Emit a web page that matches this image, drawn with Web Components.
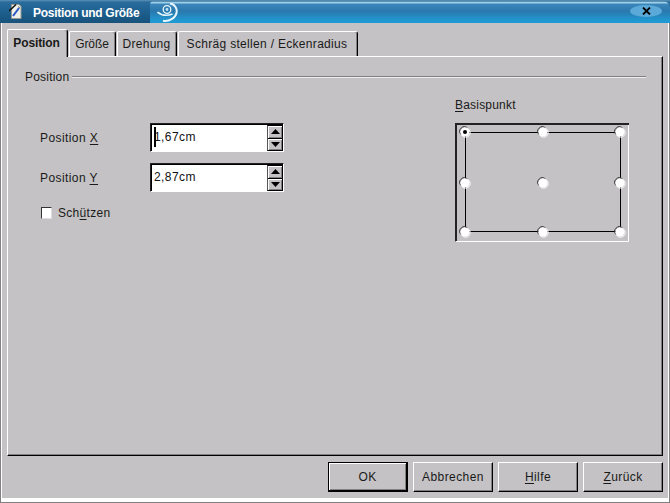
<!DOCTYPE html>
<html lang="de"><head><meta charset="utf-8"><title>Position und Größe</title>
<style>
html,body{margin:0;padding:0;background:#c4c2c4}
body{font:12px/14px "Liberation Sans",Arial,sans-serif;color:#1a1a1a;letter-spacing:.42px}
u{text-underline-offset:2px}
</style></head><body>
<dialog-window heading="Position und Größe">
  <tab-bar>
    <dlg-tab active>Position</dlg-tab>
    <dlg-tab w="47" style="letter-spacing:-.1px;padding-right:1px">Größe</dlg-tab>
    <dlg-tab w="60" style="letter-spacing:.28px;padding-right:1px">Drehung</dlg-tab>
    <dlg-tab w="180" style="letter-spacing:.31px;padding-right:2px">Schräg stellen / Eckenradius</dlg-tab>
  </tab-bar>
  <tab-panel>
    <group-line>Position</group-line>
    <div style="display:flex;justify-content:space-between">
      <div style="display:flex;flex-direction:column;padding:39px 0 0 15px">
        <spin-field value="1,67cm" caret style="margin-bottom:11px">Position <u>X</u></spin-field>
        <spin-field value="2,87cm" style="margin-bottom:15px">Position <u>Y</u></spin-field>
        <check-field>Sch<u>ü</u>tzen</check-field>
      </div>
      <base-point><u>B</u>asispunkt</base-point>
    </div>
  </tab-panel>
  <button-row>
    <dlg-button default>OK</dlg-button>
    <dlg-button>Abbrechen</dlg-button>
    <dlg-button><u>H</u>ilfe</dlg-button>
    <dlg-button><u>Z</u>urück</dlg-button>
  </button-row>
</dialog-window>
<script>
function def(name, css, html){
  customElements.define(name, class extends HTMLElement{
    connectedCallback(){
      if(this.shadowRoot) return;
      const r=this.attachShadow({mode:'open'});
      r.innerHTML='<style>'+css+'</style>'+(typeof html==='function'?html(this):html);
    }
  });
}
def('dialog-window',`
  :host{display:flex;flex-direction:column;width:670px;height:503px;overflow:hidden;background:#c4c2c4}
  .title{display:flex;height:23px;flex:none;background:linear-gradient(#5d93b8 0,#2a6c9c 2px,#1d5f8e 12px,#17527c 100%)}
  .left{width:150px;flex:none;display:flex;align-items:center;box-sizing:border-box;padding-left:9px}
  .left svg{flex:none}
  .name{font:bold 12px/16px "Liberation Sans",Arial,sans-serif;letter-spacing:-.28px;color:#fff;margin-left:11px;padding-top:2px;white-space:nowrap}
  .right{flex:1;display:flex;align-items:flex-start;justify-content:space-between;margin-top:1px;border-radius:4px 7px 0 0;
    background:linear-gradient(#17527c 0,#9fd0ea 1px,#9fd0ea 2px,#3b86ba 3px,#2a78ad 10px,#2196cf 19px,#1f9ad4 100%);padding-left:7px;padding-right:8px}
  .logo{margin-top:2px}
  .close{margin-top:4px;width:32px;height:12px;border-radius:50%;background:#5aa9d8;display:flex;align-items:center;justify-content:center}
  .body{flex:1;display:flex;border:1px solid #808080;border-top:0;min-height:0}
  .inner{flex:1;display:flex;flex-direction:column;border:1px solid #fff;border-top:0;border-bottom-width:4px;padding:6px 5px 5px;min-width:0}
`,h=>`<div class="title"><div class="left">
  <svg width="13" height="17" viewBox="0 0 13 17"><path d="M2.5 1.5H10L12 3.500V15.500H2.500Z" fill="#eef1ea" stroke="#9a9a8c"/><path d="M4 13L10 5" stroke="#2b55c4" stroke-width="2"/><path d="M0 8L7 1.500" stroke="#111" stroke-width="1.600"/><path d="M9 3.500L11 5" stroke="#777"/></svg>
  <span class="name">${h.getAttribute('heading')}</span></div>
  <div class="right">
  <svg class="logo" width="21" height="20" viewBox="0 0 21 20" fill="none" stroke="#e6f6fd"><circle cx="10" cy="6.500" r="3.800" stroke-width="1.300"/><circle cx="10" cy="6.500" r="1.400" fill="#bfe6f6" stroke="none"/><path d="M13 .5C18 1 20.500 6 19.500 10C18.500 15 12 19 6 17.800" stroke-width="2"/><path d="M.5 9C4 12 10 13 15.500 11" stroke-width="1.600"/></svg>
  <div class="close"><svg width="9" height="8" viewBox="0 0 9 8"><path d="M1 .5L8 7.500M8 .5L1 7.500" stroke="#000" stroke-width="1.800"/></svg></div>
  </div></div>
  <div class="body"><div class="inner"><slot></slot></div></div>`);
def('tab-bar',`:host{display:flex;align-items:flex-end;height:27px;flex:none;position:relative;z-index:1;gap:0}`,`<slot></slot>`);
def('dlg-tab',`
  :host{display:block;box-sizing:border-box;height:25px;margin-right:1px;border:1px solid #fff;border-bottom:0;border-right:1px solid #000;box-shadow:inset -1px 0 #808080;border-radius:2px 3px 0 0;text-align:center;line-height:24px;white-space:nowrap}
  :host([active]){height:28px;width:61px;margin-bottom:-1px;margin-right:1px;padding-right:2px;background:#c4c2c4;font-weight:bold;letter-spacing:-.12px;line-height:27px}
`,h=>{if(h.hasAttribute('w'))h.style.width=h.getAttribute('w')+'px';return '<slot></slot>'});
def('tab-panel',`:host{display:flex;flex-direction:column;box-sizing:border-box;height:400px;flex:none;border:1px solid #fff;border-right-color:#000;border-bottom-color:#000;box-shadow:inset -1px -1px #808080;padding:13px 16px 0 17px}`,`<slot></slot>`);
def('group-line',`
  :host{display:flex;align-items:center;height:14px;gap:3px;letter-spacing:.2px}
  i{flex:1;height:1px;background:#808080;border-bottom:1px solid #eee;margin-top:-1px}
`,`<span><slot></slot></span><i></i>`);
const arrow=d=>`<svg width="9" height="5" viewBox="0 0 9 5"><path d="${d}" fill="#000"/></svg>`;
def('spin-field',`
  :host{display:flex;align-items:center;height:29px}
  label{width:110px;flex:none}
  .box{box-sizing:border-box;width:134px;height:29px;border:1px solid;border-color:#222 #fff #fff #222;position:relative;display:flex}
  .in{flex:1;display:flex;background:#fff;border-top:1px solid #000;border-left:1px solid #000}
  .txt{flex:1;padding-left:2px;line-height:25px;color:#111}
  .caret{position:absolute;left:3px;top:3px;width:2px;height:20px;background:#000}
  .spin{width:16px;display:flex;flex-direction:column;background:#000;gap:1px;border:1px solid #000;border-left:1px solid #555;box-sizing:border-box}
  .spin b{flex:1;display:flex;align-items:center;justify-content:center;background:#c4c2c4;box-shadow:inset 1px 1px #fff,inset -1px -1px #808080}
`,h=>`<label><slot></slot></label><div class="box"><div class="in"><span class="txt">${h.getAttribute('value')}</span>${h.hasAttribute('caret')?'<span class="caret"></span>':''}
  <div class="spin"><b>${arrow('M4.5 0L9 5H0Z')}</b><b>${arrow('M0 0H9L4.5 5Z')}</b></div></div></div>`);
def('check-field',`
  :host{display:flex;align-items:center;height:12px;gap:6px;padding-left:1px}
  i{box-sizing:border-box;width:11px;height:12px;background:#fff;border:1px solid #333;border-right-color:#ddd;border-bottom-color:#ddd}
`,`<i></i><span style="letter-spacing:.3px"><slot></slot></span>`);
def('base-point',`
  :host{display:flex;flex-direction:column;width:174px;margin-right:17px;padding-top:14px;letter-spacing:.2px}
  span{height:14px;margin-bottom:11px}
  .frame{width:174px;height:119px;display:block}
`,()=>{
  const xs=[10,88,165],ys=[9,60,109];
  let dots='';
  ys.forEach((y,j)=>xs.forEach((x,i)=>{
    dots+=`<circle cx="${x}" cy="${y}" r="4.500" fill="#fff"/><path d="M${x-4} ${y+2.5}A4.6 4.6 0 0 1 ${x+2.5} ${y-4}" fill="none" stroke="#333" stroke-width="1"/><circle cx="${x+.6}" cy="${y+.6}" r="4.600" fill="none" stroke="#fff" stroke-width="1"/>`;
    if(!i&&!j)dots+=`<circle cx="${x}" cy="${y}" r="2" fill="#000"/>`;
  }));
  return `<span><slot></slot></span><svg class="frame" viewBox="0 0 174 119"><path d="M1 119V1H174" fill="none" stroke="#222" stroke-width="2"/><path d="M.5 118.500H173.500V2" fill="none" stroke="#fff"/><rect x="10.500" y="9.500" width="155" height="99" fill="none" stroke="#000"/>${dots}</svg>`;
});
def('button-row',`:host{display:flex;justify-content:flex-end;gap:5px;margin-top:6px;flex:none}`,`<slot></slot>`);
def('dlg-button',`
  :host{display:flex;align-items:center;justify-content:center;box-sizing:border-box;width:80px;height:30px;border:1px solid #fff;border-right-color:#000;border-bottom-color:#000;box-shadow:inset -1px -1px #808080}
  :host([default]){border:1px solid #000;border-right-width:2px;border-bottom-width:2px;box-shadow:inset 1px 1px #fff,inset -1px -1px #808080}
`,`<slot></slot>`);
</script>
</body></html>
